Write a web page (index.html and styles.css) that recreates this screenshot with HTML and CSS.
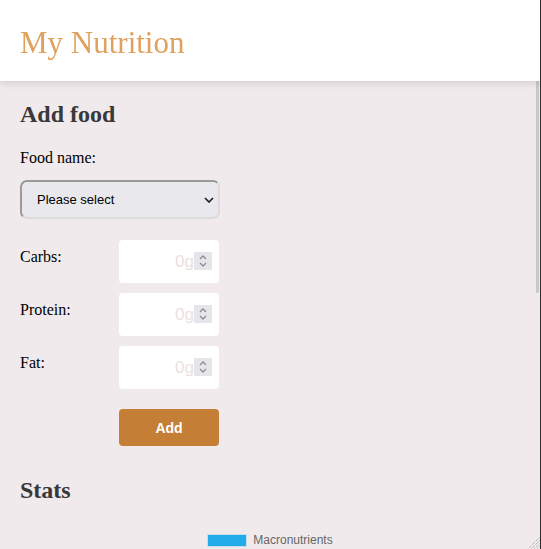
FILE: index.html
```html
<!DOCTYPE html>
<html lang="en">
<head>
<meta charset="utf-8">
<title>My Nutrition</title>
<link rel="stylesheet" href="styles.css">
</head>
<body>
<div class="viewport">
  <header class="topbar">
    <h1 class="brand">My Nutrition</h1>
  </header>
  <main class="content">
    <section class="add-food">
      <h2 class="section-title">Add food</h2>
      <label class="food-label" for="food">Food name:</label>
      <div class="select-wrap">
        <select id="food" class="food-select">
          <option>Please select</option>
        </select>
        <svg class="select-arrow" width="10" height="6" viewBox="0 0 10 6" aria-hidden="true">
          <polyline points="1,1 5,5 9,1" fill="none" stroke="#1a1a1a" stroke-width="1.6"/>
        </svg>
      </div>
      <div class="macro-rows">
        <div class="macro-row">
          <label class="macro-label" for="carbs">Carbs:</label>
          <div class="num-wrap">
            <input id="carbs" class="macro-input" type="number" placeholder="0g">
            <span class="spinner" aria-hidden="true"><svg width="10" height="14" viewBox="0 0 10 14"><polyline points="2,5 5,2 8,5" fill="none" stroke="#8c8c92" stroke-width="1.3"/><polyline points="2,9 5,12 8,9" fill="none" stroke="#8c8c92" stroke-width="1.3"/></svg></span>
          </div>
        </div>
        <div class="macro-row">
          <label class="macro-label" for="protein">Protein:</label>
          <div class="num-wrap">
            <input id="protein" class="macro-input" type="number" placeholder="0g">
            <span class="spinner" aria-hidden="true"><svg width="10" height="14" viewBox="0 0 10 14"><polyline points="2,5 5,2 8,5" fill="none" stroke="#8c8c92" stroke-width="1.3"/><polyline points="2,9 5,12 8,9" fill="none" stroke="#8c8c92" stroke-width="1.3"/></svg></span>
          </div>
        </div>
        <div class="macro-row">
          <label class="macro-label" for="fat">Fat:</label>
          <div class="num-wrap">
            <input id="fat" class="macro-input" type="number" placeholder="0g">
            <span class="spinner" aria-hidden="true"><svg width="10" height="14" viewBox="0 0 10 14"><polyline points="2,5 5,2 8,5" fill="none" stroke="#8c8c92" stroke-width="1.3"/><polyline points="2,9 5,12 8,9" fill="none" stroke="#8c8c92" stroke-width="1.3"/></svg></span>
          </div>
        </div>
        <div class="macro-row action-row">
          <span class="macro-label"></span>
          <button class="add-btn" type="button">Add</button>
        </div>
      </div>
    </section>
    <section class="stats">
      <h2 class="section-title stats-title">Stats</h2>
      <div class="chart">
        <div class="legend">
          <span class="swatch"></span>
          <span class="legend-text">Macronutrients</span>
        </div>
        <div class="plot"></div>
      </div>
    </section>
  </main>
</div>
<div class="scroll-thumb"></div>
<svg class="resizer" width="13" height="13" viewBox="0 0 13 13" aria-hidden="true">
  <line x1="12.5" y1="1.5" x2="1.5" y2="12.5" stroke="#9a9a9a" stroke-width="1" stroke-dasharray="1 1"/>
  <line x1="12.5" y1="4.5" x2="4.5" y2="12.5" stroke="#9a9a9a" stroke-width="1" stroke-dasharray="1 1"/>
  <line x1="12.5" y1="7.5" x2="7.5" y2="12.5" stroke="#9a9a9a" stroke-width="1" stroke-dasharray="1 1"/>
  <line x1="12.5" y1="10.5" x2="10.5" y2="12.5" stroke="#9a9a9a" stroke-width="1" stroke-dasharray="1 1"/>
</svg>
</body>
</html>
```

FILE: styles.css
```css
html, body {
  margin: 0;
  padding: 0;
  overflow: hidden;
  background: #f0eaec;
}

.viewport {
  width: 541px;
  height: 549px;
  box-sizing: border-box;
  border-right: 1px solid #2e2e2e;
  overflow-y: scroll;
  background: #f0eaec;
  font-family: "Liberation Serif", "Times New Roman", serif;
}

.viewport::-webkit-scrollbar {
  width: 4px;
}
.viewport::-webkit-scrollbar-track {
  background: transparent;
}
.viewport::-webkit-scrollbar-thumb {
  background: #c8c8c8;
  border-radius: 2px;
}

.scroll-thumb {
  position: fixed;
  top: 1px;
  right: 2px;
  width: 3px;
  height: 292px;
  border-radius: 2px;
  background: #c8c8c8;
}

.topbar {
  position: relative;
  z-index: 1;
  height: 81px;
  box-sizing: border-box;
  padding: 25px 20px 0;
  background: #ffffff;
  box-shadow: 0 2px 7px rgba(0, 0, 0, 0.13);
}

.brand {
  margin: 0;
  font-size: 31px;
  font-weight: normal;
  color: #e0a15c;
}

.content {
  padding: 20px;
}

.section-title {
  margin: 0;
  font-size: 24px;
  font-weight: bold;
  color: #3a3838;
}

.food-label {
  display: block;
  margin: 21px 0 13px;
  font-size: 16px;
  color: #000;
}

.select-wrap {
  position: relative;
  width: 200px;
}

.food-select {
  display: block;
  width: 200px;
  height: 39px;
  box-sizing: border-box;
  padding: 0 24px 0 15px;
  border: 2px solid;
  border-color: #9a9a9a #dcdcdc #dcdcdc #9a9a9a;
  border-radius: 7px;
  background-color: #e9e8ec;
  color: #000;
  font-family: "Liberation Sans", Arial, sans-serif;
  font-size: 13px;
  -webkit-appearance: none;
  appearance: none;
}

.select-arrow {
  position: absolute;
  right: 6px;
  top: 17px;
  pointer-events: none;
}

.macro-rows {
  display: flex;
  flex-direction: column;
  gap: 10px;
  margin-top: 21px;
}

.macro-row {
  display: flex;
  align-items: flex-start;
}

.macro-label {
  width: 99px;
  padding-top: 8px;
  font-size: 16px;
  color: #000;
}

.num-wrap {
  position: relative;
  width: 100px;
}

.macro-input {
  display: block;
  width: 100px;
  height: 43px;
  box-sizing: border-box;
  padding: 0 25px 0 8px;
  border: none;
  border-radius: 4px;
  background: #ffffff;
  text-align: right;
  font-family: "Liberation Sans", Arial, sans-serif;
  font-size: 17px;
  outline: none;
  -moz-appearance: textfield;
}

.macro-input::placeholder {
  color: #ecdfe0;
}

.macro-input::-webkit-inner-spin-button,
.macro-input::-webkit-outer-spin-button {
  -webkit-appearance: none;
  margin: 0;
}

.spinner {
  position: absolute;
  top: 12px;
  right: 7px;
  width: 18px;
  height: 18px;
  display: flex;
  align-items: center;
  justify-content: center;
  background: #e6e5ea;
  pointer-events: none;
}

.action-row {
  margin-top: 10px;
}

.add-btn {
  width: 100px;
  height: 37px;
  border: none;
  border-radius: 4px;
  background: #c47e36;
  color: #ffffff;
  font-family: "Liberation Sans", Arial, sans-serif;
  font-size: 14px;
  font-weight: bold;
  cursor: pointer;
}

.stats-title {
  margin-top: 31px;
}

.chart {
  margin-top: 20px;
  height: 485px;
}

.legend {
  display: flex;
  justify-content: center;
  align-items: center;
  gap: 6px;
  padding-top: 10px;
  font-family: "Liberation Sans", Arial, sans-serif;
  font-size: 12px;
  color: #666666;
}

.swatch {
  width: 38px;
  height: 11px;
  background: #22abe9;
  border: 1px solid #c9dde8;
}

.legend-text {
  line-height: 13px;
}

.resizer {
  position: fixed;
  right: 1px;
  bottom: 0;
}
```
